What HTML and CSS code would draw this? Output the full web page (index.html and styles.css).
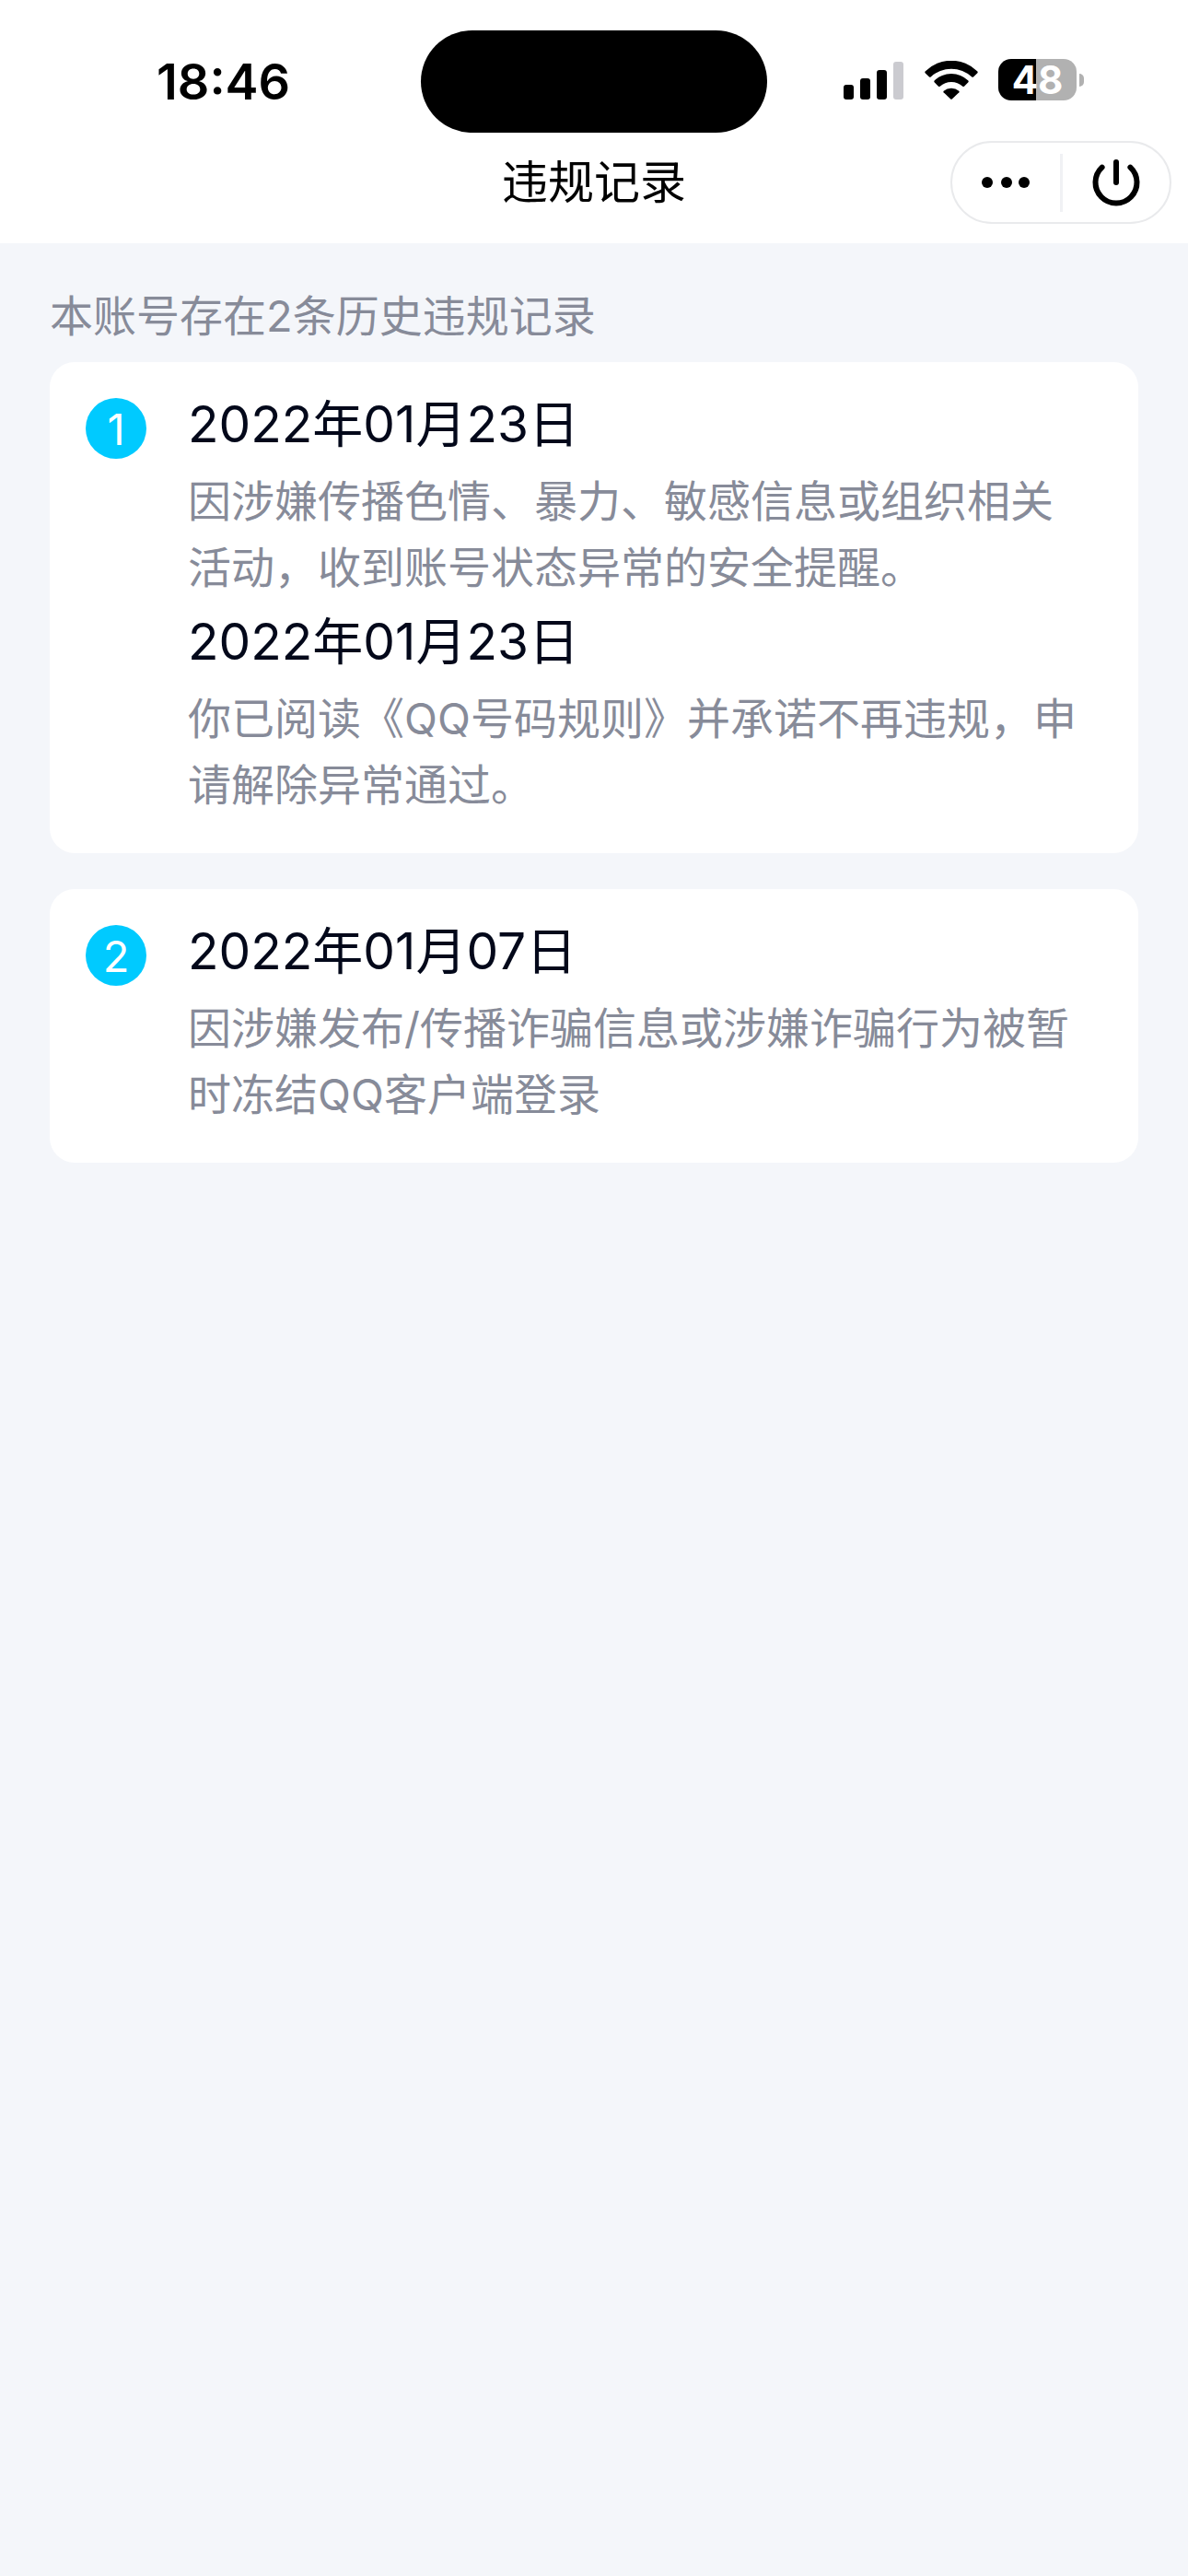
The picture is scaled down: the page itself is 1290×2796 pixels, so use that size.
FILE: index.html
```
<!DOCTYPE html>
<html lang="zh-CN">
<head>
<meta charset="utf-8">
<meta name="viewport" content="width=device-width, initial-scale=1">
<title>违规记录</title>
<link rel="stylesheet" href="styles.css">
</head>
<body>
<header class="top">
  <div class="status">
    <time class="clock">18:46</time>
    <div class="island"></div>
    <div class="indicators">
      <svg class="signal" viewBox="0 0 65 42" width="65" height="42" aria-hidden="true">
        <rect x="0" y="26" width="11" height="16" rx="3"/>
        <rect x="18" y="19" width="11" height="23" rx="3"/>
        <rect x="36" y="10" width="11" height="32" rx="3"/>
        <rect x="54" y="1" width="11" height="41" rx="3" fill="#cbcbd0"/>
      </svg>
      <svg class="wifi" viewBox="0 0 58 42" width="58" height="42" aria-hidden="true">
        <path d="M.6 11.400A40.400 40.400 0 0 1 57.400 11.400Q58 12.300 57.400 13.200L53 17.500Q52.200 18.200 51.300 17.500A32.500 32.500 0 0 0 6.700 17.500Q5.800 18.200 5 17.500L.6 13.200Q0 12.300 .6 11.400Z"/>
        <path d="M10.600 21.600A26.300 26.300 0 0 1 47.400 21.600Q48 22.500 47.400 23.300L43 27.700Q42.200 28.300 41.300 27.700A18.500 18.500 0 0 0 16.700 27.700Q15.800 28.300 15 27.700L10.600 23.300Q10 22.500 10.600 21.600Z"/>
        <path d="M20.700 32.800A13 13 0 0 1 37.300 32.800Q38 33.500 37.400 34.200L29.800 41.500Q29 42.200 28.200 41.500L20.600 34.200Q20 33.500 20.700 32.800Z"/>
      </svg>
      <div class="battery"><span class="battery-level">48</span><span class="battery-tip"></span></div>
    </div>
  </div>
  <nav class="nav">
    <h1 class="title">违规记录</h1>
    <div class="capsule">
      <button class="capsule-btn" type="button" aria-label="更多">
        <svg viewBox="0 0 52 12" width="52" height="12"><circle cx="6" cy="6" r="6"/><circle cx="27" cy="6" r="6"/><circle cx="46" cy="6" r="6"/></svg>
      </button>
      <span class="divider"></span>
      <button class="capsule-btn" type="button" aria-label="关闭">
        <svg viewBox="0 0 52 52" width="52" height="52" fill="none" stroke="#000" stroke-width="6" stroke-linecap="round"><path d="M26 4V26"/><path d="M10.600 9.600A22.500 22.500 0 1 0 41.400 9.600"/></svg>
      </button>
    </div>
  </nav>
</header>
<main class="content">
  <p class="summary">本账号存在2条历史违规记录</p>
  <ol class="records">
    <li class="card">
      <span class="badge">1</span>
      <div class="entries">
        <section>
          <h2 class="date">2022年01月23日</h2>
          <p class="desc">因涉嫌传播色情、暴力、敏感信息或组织相关活动，收到账号状态异常的安全提醒。</p>
        </section>
        <section>
          <h2 class="date">2022年01月23日</h2>
          <p class="desc">你已阅读《QQ号码规则》并承诺不再违规，申请解除异常通过。</p>
        </section>
      </div>
    </li>
    <li class="card">
      <span class="badge">2</span>
      <div class="entries">
        <section>
          <h2 class="date">2022年01月07日</h2>
          <p class="desc">因涉嫌发布/传播诈骗信息或涉嫌诈骗行为被暂时冻结QQ客户端登录</p>
        </section>
      </div>
    </li>
  </ol>
</main>
</body>
</html>
```
FILE: styles.css
```
* {
  box-sizing: border-box;
}

body {
  margin: 0;
  min-height: 100vh;
  background: #f4f6fa;
  color: #03081a;
  font-family: Inter, "Noto Sans CJK SC", sans-serif;
  font-size: 47px;
  line-height: 72px;
}

h1, h2, p, ol {
  margin: 0;
  padding: 0;
  font-weight: 400;
}

.top {
  background: #fff;
  color: #000;
}

/* Status bar */
.status {
  display: grid;
  grid-template-columns: 1fr auto 1fr;
  align-items: center;
  padding-top: 33px;
}

.clock {
  padding-left: 170px;
  font-size: 54px;
  font-weight: 600;
}

.island {
  width: 376px;
  height: 111px;
  border-radius: 56px;
  background: #000;
}

.indicators {
  display: flex;
  align-items: center;
  justify-content: flex-end;
  padding: 0 113px 4px 0;
}

.signal {
  margin-right: 23px;
}

.wifi {
  margin-right: 22px;
}

.battery {
  display: flex;
  align-items: center;
  gap: 3px;
}

.battery-level {
  width: 85px;
  height: 45px;
  border-radius: 14px;
  background: linear-gradient(90deg, #000 48%, #b1b1b1 48%);
  color: #fff;
  font-size: 42px;
  font-weight: 700;
  line-height: 45px;
  text-align: center;
}

.battery-tip {
  width: 5px;
  height: 14px;
  border-radius: 0 5px 5px 0;
  background: #b1b1b1;
}

/* Navigation bar */
.nav {
  display: grid;
  grid-template-columns: 1fr auto 1fr;
  align-items: center;
  height: 120px;
  padding: 0 18px 12px;
}

.title {
  grid-column: 2;
  font-size: 50px;
}

.capsule {
  display: flex;
  align-items: center;
  justify-self: end;
  width: 240px;
  height: 90px;
  border: 2px solid #e9eaec;
  border-radius: 45px;
}

.capsule-btn {
  display: flex;
  flex: 1;
  align-items: center;
  justify-content: center;
  height: 86px;
  padding: 0;
  border: 0;
  background: none;
}

.divider {
  width: 3px;
  height: 63px;
  background: #f0f1f4;
}

/* Records */
.content {
  padding: 43px 54px;
}

.summary {
  margin-bottom: 14px;
  color: #878b99;
}

.records {
  display: grid;
  gap: 39px;
  list-style: none;
}

.card {
  display: flex;
  align-items: flex-start;
  gap: 45px;
  padding: 25px 51px 36px 39px;
  border-radius: 27px;
  background: #fff;
}

.badge {
  flex: none;
  width: 66px;
  height: 66px;
  margin-top: 14px;
  border-radius: 50%;
  background: #00caff;
  color: #fff;
  line-height: 68px;
  text-align: center;
}

.entries {
  flex: 1;
}

.date {
  font-size: 55px;
  line-height: 84px;
}

.desc {
  margin: 6px 0 2px;
  color: #878b99;
}
```
